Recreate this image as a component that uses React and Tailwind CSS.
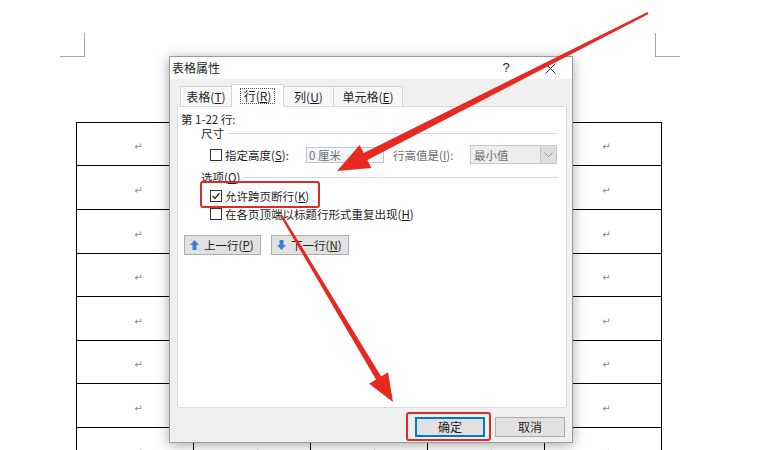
import React from 'react';

const rows = [43, 44, 44, 43, 44, 43, 44, 44];
const cols = [0, 1, 2, 3, 4];

const Acc = ({ k }) => <span className="underline">{k}</span>;

const CheckBox = ({ checked }) => (
    <svg width="12" height="12" viewBox="0 0 12 12" className="shrink-0">
        <rect x="0.5" y="0.5" width="11" height="11" fill="#fff" stroke="#333" />
        {checked && <path d="M2.5 6 L5 8.5 L9.5 3" fill="none" stroke="#222" strokeWidth="1.2" />}
    </svg>
);

const Arrow = ({ up }) => (
    <svg width="9" height="10" viewBox="0 0 9 10" className="shrink-0">
        {up ? (
            <polygon points="4.5,0 9,5 6.5,5 6.5,10 2.5,10 2.5,5 0,5" fill="#3d7dd8" />
        ) : (
            <polygon points="4.5,10 9,5 6.5,5 6.5,0 2.5,0 2.5,5 0,5" fill="#3d7dd8" />
        )}
    </svg>
);

const App = () => {
    return (
        <div className="relative w-[774px] h-[450px] overflow-hidden bg-white font-['Noto_Sans_CJK_SC',sans-serif] text-[#1e1e1e]">
            {/* page corner marks */}
            <div className="flex pt-[33px]">
                <div className="ml-[60px] w-[25px] h-[24px] border-r border-b border-[#a6a6a6]" />
                <div className="ml-auto mr-[94px] w-[25px] h-[24px] border-l border-b border-[#a6a6a6]" />
            </div>

            {/* document table */}
            <div className="mt-[65px] ml-[76px] w-[586px] border-l border-t border-black">
                {rows.map((h, i) => (
                    <div key={i} className="flex">
                        {cols.map((c) => (
                            <div
                                key={c}
                                style={{ height: h }}
                                className="w-[117px] border-r border-b border-black flex items-center justify-center pl-[7px] pt-[5px]"
                            >
                                {/* cells hidden under the dialog get no mark */}
                                {(c === 0 || c === 4 || i === 7) && (
                                    <span className="font-['DejaVu_Sans',sans-serif] text-[10px] text-[#8c8c8c]">↵</span>
                                )}
                            </div>
                        ))}
                    </div>
                ))}
            </div>

            {/* dialog */}
            <div className="absolute left-[169px] top-[56px] w-[404px] h-[387px] bg-[#f0f0f0] border border-[#9b9b9b] shadow-[0_2px_12px_rgba(0,0,0,0.35)] text-[11.5px] leading-[14px]">
                <div className="h-[22px] bg-white flex items-center pl-[2px] text-[12px]">
                    <span>表格属性</span>
                    <span className="ml-auto w-[20px] text-center font-['Liberation_Sans',sans-serif] text-[13px]">?</span>
                    <div className="ml-[12px] w-[44px] flex justify-center">
                        <svg width="11" height="11" viewBox="0 0 11 11">
                            <path d="M0.5 0.5 L10.5 10.5 M10.5 0.5 L0.5 10.5" stroke="#333" strokeWidth="1" />
                        </svg>
                    </div>
                </div>

                <div className="mt-[5px] h-[22px] flex items-end pl-[10px] text-[12px]">
                    <div className="w-[52px] h-[20px] border border-b-0 border-[#d4d4d4] bg-[#f7f7f7] flex items-center justify-center">
                        表格(<Acc k="T" />)
                    </div>
                    <div className="relative z-10 -ml-px -mb-px w-[53px] h-[23px] border border-b-0 border-[#d4d4d4] bg-white flex items-center justify-center">
                        <span className="px-[3px] border border-dotted border-[#555]">
                            行(<Acc k="R" />)
                        </span>
                    </div>
                    <div className="-ml-px w-[51px] h-[20px] border border-b-0 border-[#d4d4d4] bg-[#f7f7f7] flex items-center justify-center">
                        列(<Acc k="U" />)
                    </div>
                    <div className="-ml-px w-[70px] h-[20px] border border-b-0 border-[#d4d4d4] bg-[#f7f7f7] flex items-center justify-center">
                        单元格(<Acc k="E" />)
                    </div>
                </div>

                <div className="ml-[7px] w-[390px] h-[302px] bg-white border border-[#d9d9d9] pt-[5px]">
                    <div className="pl-[3px] h-[14px]">第 1-22 行:</div>

                    <div className="flex items-center h-[14px] pl-[23px] pr-[8px]">
                        <span>尺寸</span>
                        <div className="ml-[3px] flex-1 h-px bg-[#dcdcdc]" />
                    </div>

                    <div className="mt-[5px] h-[19px] flex items-center pl-[32px]">
                        <CheckBox />
                        <span className="ml-[3px] w-[81px]">
                            指定高度(<Acc k="S" />):
                        </span>
                        <div className="w-[78px] h-[16px] border border-[#b9c6d8] bg-[#f4f6f9] flex items-center pl-[2px] text-[#6d6d6d]">
                            <span className="flex-1">0 厘米</span>
                            <div className="w-[14px] h-full border-l border-[#d5dde8]" />
                        </div>
                        <span className="ml-[9px] w-[77px] text-[#6d6d6d]">
                            行高值是(<Acc k="I" />):
                        </span>
                        <div className="w-[87px] h-[19px] border border-[#c8c8c8] bg-[#ededed] flex items-center text-[#6d6d6d]">
                            <span className="flex-1 pl-[3px]">最小值</span>
                            <div className="w-[16px] h-full border-l border-[#c8c8c8] bg-[#dedede] flex items-center justify-center">
                                <svg width="9" height="5" viewBox="0 0 9 5">
                                    <path d="M0.5 0.5 L4.5 4.5 L8.5 0.5" fill="none" stroke="#9a9a9a" />
                                </svg>
                            </div>
                        </div>
                    </div>

                    <div className="mt-[6px] flex items-center h-[14px] pl-[23px] pr-[8px]">
                        <span>
                            选项(<Acc k="O" />)
                        </span>
                        <div className="ml-[3px] flex-1 h-px bg-[#dcdcdc]" />
                    </div>

                    <div className="mt-[3px] h-[18px] flex items-center pl-[32px]">
                        <CheckBox checked />
                        <span className="ml-[3px]">
                            允许跨页断行(<Acc k="K" />)
                        </span>
                    </div>
                    <div className="h-[18px] flex items-center pl-[32px]">
                        <CheckBox />
                        <span className="ml-[3px]">
                            在各页顶端以标题行形式重复出现(<Acc k="H" />)
                        </span>
                    </div>

                    <div className="mt-[12px] flex gap-[10px] pl-[6px]">
                        <div className="w-[77px] h-[20px] bg-[#e1e1e1] border border-[#adadad] flex items-center pl-[5px] gap-[5px]">
                            <Arrow up />
                            <span>
                                上一行(<Acc k="P" />)
                            </span>
                        </div>
                        <div className="w-[78px] h-[20px] bg-[#e1e1e1] border border-[#adadad] flex items-center pl-[5px] gap-[5px]">
                            <Arrow />
                            <span>
                                下一行(<Acc k="N" />)
                            </span>
                        </div>
                    </div>
                </div>

                <div className="mt-[9px] flex justify-end gap-[10px] pr-[7px] text-[12px]">
                    <div className="w-[70px] h-[20px] bg-[#e1e1e1] border border-[#0078d7] shadow-[inset_0_0_0_1px_#0078d7] flex items-center justify-center">
                        确定
                    </div>
                    <div className="w-[70px] h-[20px] bg-[#e1e1e1] border border-[#adadad] flex items-center justify-center">
                        取消
                    </div>
                </div>
            </div>

            {/* red annotations */}
            <svg className="absolute inset-0 pointer-events-none" width="774" height="450" viewBox="0 0 774 450">
                <rect x="201" y="182" width="118" height="25" rx="2" fill="none" stroke="#dd2b25" strokeWidth="2" />
                <rect x="407" y="413" width="83" height="27" rx="2" fill="none" stroke="#dd2b25" strokeWidth="2" />
                <polygon
                    points="648.54,14.07 367.34,160.07 371.42,168.09 337,171 359.64,144.91 363.72,152.93 647.46,11.93"
                    fill="#e8291f"
                />
                <polygon
                    points="279.97,215.62 376.04,379.52 369.17,383.63 393,402 388.05,372.33 381.18,376.44 282.03,214.38"
                    fill="#e8291f"
                />
            </svg>
        </div>
    );
};

export default App;
